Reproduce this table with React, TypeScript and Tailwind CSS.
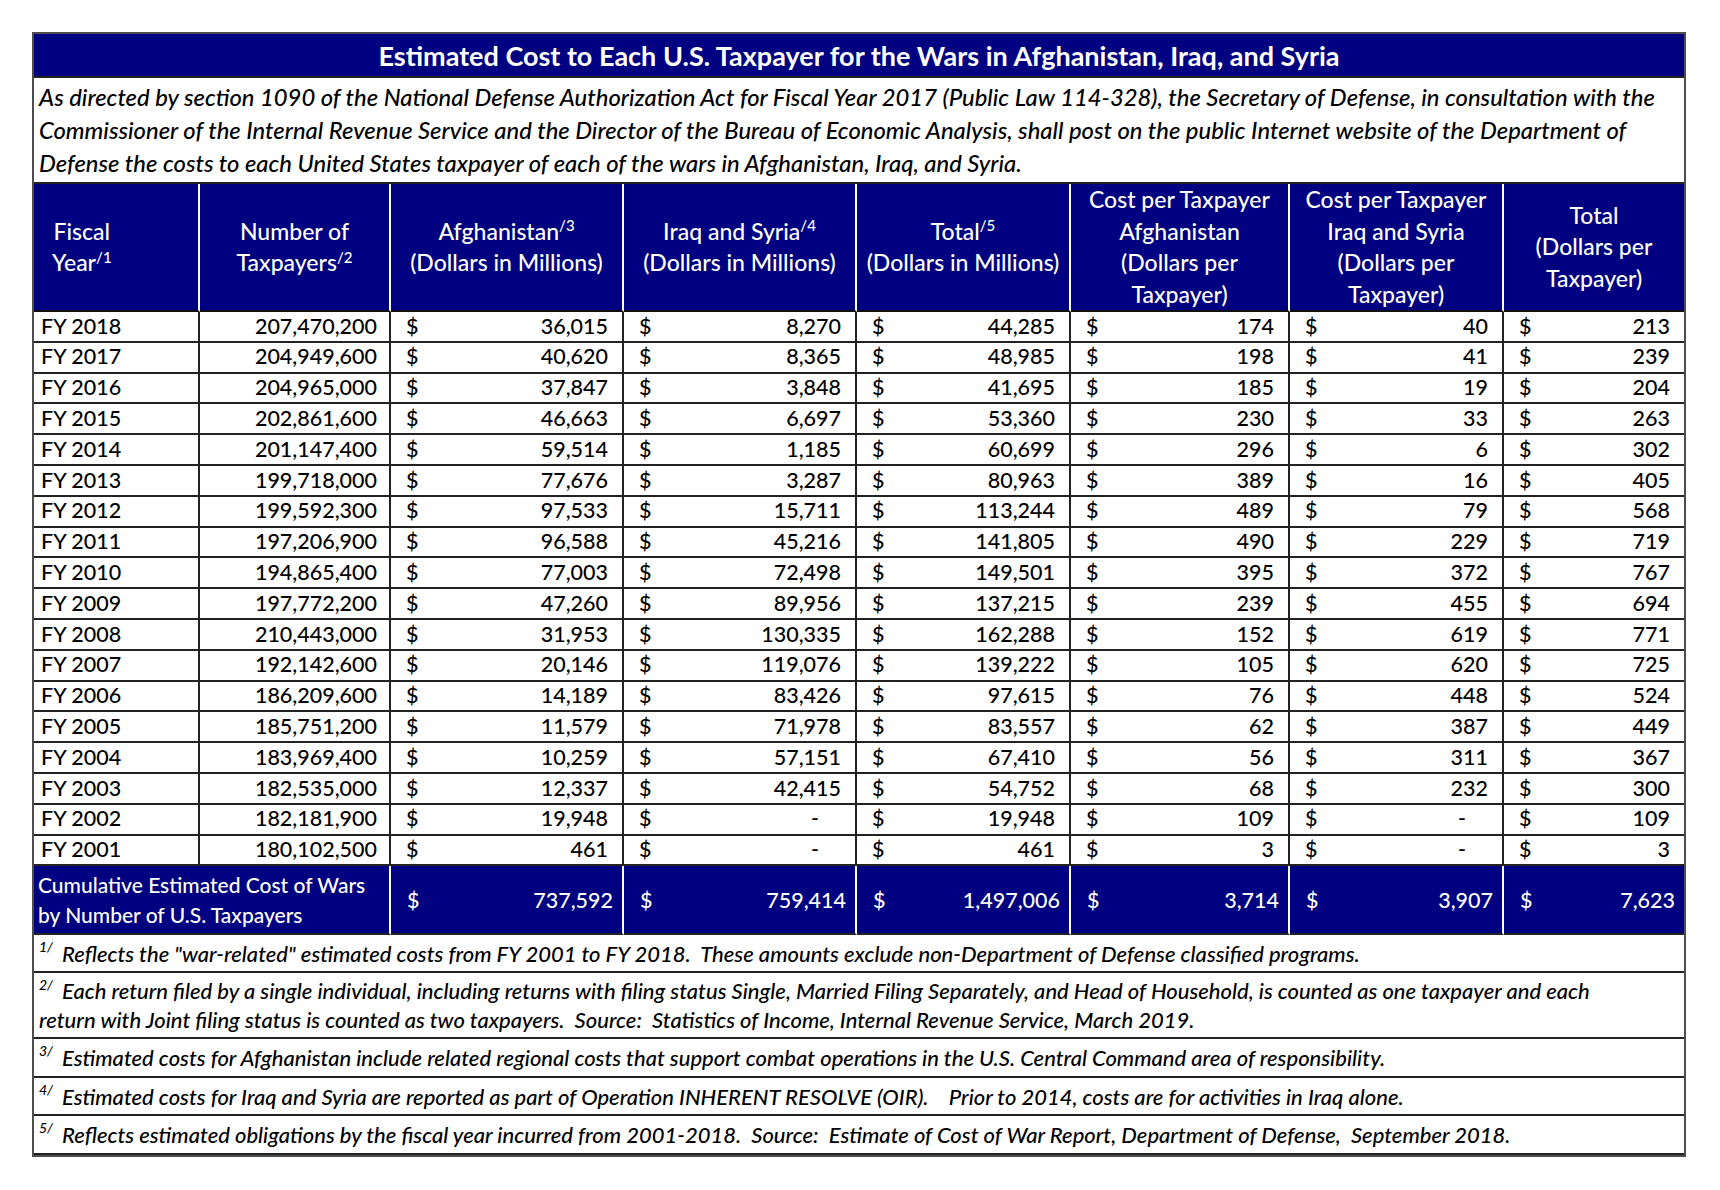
import React from 'react';

const rows: string[][] = [
  ['FY 2018', '207,470,200', '36,015', '8,270', '44,285', '174', '40', '213'],
  ['FY 2017', '204,949,600', '40,620', '8,365', '48,985', '198', '41', '239'],
  ['FY 2016', '204,965,000', '37,847', '3,848', '41,695', '185', '19', '204'],
  ['FY 2015', '202,861,600', '46,663', '6,697', '53,360', '230', '33', '263'],
  ['FY 2014', '201,147,400', '59,514', '1,185', '60,699', '296', '6', '302'],
  ['FY 2013', '199,718,000', '77,676', '3,287', '80,963', '389', '16', '405'],
  ['FY 2012', '199,592,300', '97,533', '15,711', '113,244', '489', '79', '568'],
  ['FY 2011', '197,206,900', '96,588', '45,216', '141,805', '490', '229', '719'],
  ['FY 2010', '194,865,400', '77,003', '72,498', '149,501', '395', '372', '767'],
  ['FY 2009', '197,772,200', '47,260', '89,956', '137,215', '239', '455', '694'],
  ['FY 2008', '210,443,000', '31,953', '130,335', '162,288', '152', '619', '771'],
  ['FY 2007', '192,142,600', '20,146', '119,076', '139,222', '105', '620', '725'],
  ['FY 2006', '186,209,600', '14,189', '83,426', '97,615', '76', '448', '524'],
  ['FY 2005', '185,751,200', '11,579', '71,978', '83,557', '62', '387', '449'],
  ['FY 2004', '183,969,400', '10,259', '57,151', '67,410', '56', '311', '367'],
  ['FY 2003', '182,535,000', '12,337', '42,415', '54,752', '68', '232', '300'],
  ['FY 2002', '182,181,900', '19,948', '-', '19,948', '109', '-', '109'],
  ['FY 2001', '180,102,500', '461', '-', '461', '3', '-', '3'],
];

const totals = ['737,592', '759,414', '1,497,006', '3,714', '3,907', '7,623'];

const footnotes = [
  ['3/', 'Estimated costs for Afghanistan include related regional costs that support combat operations in the U.S. Central Command area of responsibility.'],
  ['4/', 'Estimated costs for Iraq and Syria are reported as part of Operation INHERENT RESOLVE (OIR).    Prior to 2014, costs are for activities in Iraq alone.'],
  ['5/', 'Reflects estimated obligations by the fiscal year incurred from 2001-2018.  Source:  Estimate of Cost of War Report, Department of Defense,  September 2018.'],
];

const line = 'border-[#222]';
const foot = `border-b-2 ${line} px-[5px] italic text-[22px] leading-[29px] whitespace-pre-wrap`;

function Sup({ children }: { children: React.ReactNode }) {
  return <sup className="text-[15px] -top-[0.55em]">{children}</sup>;
}

function FootMark({ n }: { n: string }) {
  return <sup className="text-[14px] -top-[0.7em] mr-[9px]">{n}</sup>;
}

function Money({ v, last }: { v: string; last?: boolean }) {
  return (
    <td className={`border-b-2 ${last ? '' : 'border-r-2'} ${line} p-0`}>
      <div className="flex justify-between items-center pl-[15px] pr-[14px]">
        <span>$</span>
        {v === '-' ? <span className="mr-[22px]">-</span> : <span>{v}</span>}
      </div>
    </td>
  );
}

export default function App() {
  const head = 'border-r-2 border-white border-b-2 border-b-[#111] text-center leading-[31.5px] p-0';
  return (
    <div className="min-h-screen bg-white pt-[32px] pl-[32px] font-['Lato',sans-serif] font-medium text-black">
      <div className="w-[1654px] border-2 border-[#4d4d4d]">
        <table className="w-full table-fixed border-separate border-spacing-0 text-[21.5px]">
          <colgroup>
            <col className="w-[166px]" />
            <col className="w-[191px]" />
            <col className="w-[233px]" />
            <col className="w-[233px]" />
            <col className="w-[214px]" />
            <col className="w-[219px]" />
            <col className="w-[214px]" />
            <col className="w-[180px]" />
          </colgroup>
          <tbody>
            <tr className="h-[44px]">
              <td colSpan={8} className={`bg-[#000080] text-white text-center font-bold text-[27px] leading-none border-b-2 ${line}`}>
                Estimated Cost to Each U.S. Taxpayer for the Wars in Afghanistan, Iraq, and Syria
              </td>
            </tr>
            <tr className="h-[106px]">
              <td colSpan={8} className={`border-b-2 ${line} px-[5px] italic text-[23.8px] leading-[33px] align-middle`}>
                As directed by section 1090 of the National Defense Authorization Act for Fiscal Year 2017 (Public Law 114-328), the Secretary of Defense, in consultation with the
                <br />
                Commissioner of the Internal Revenue Service and the Director of the Bureau of Economic Analysis, shall post on the public Internet website of the Department of
                <br />
                Defense the costs to each United States taxpayer of each of the wars in Afghanistan, Iraq, and Syria.
              </td>
            </tr>
            <tr className="h-[125px] bg-[#000080] text-white text-[23px]">
              <td className={`${head} text-left`}>
                <div className="inline-block text-center pl-[18px]">
                  Fiscal
                  <br />
                  Year<Sup>/1</Sup>
                </div>
              </td>
              <td className={head}>
                Number of
                <br />
                Taxpayers<Sup>/2</Sup>
              </td>
              <td className={head}>
                Afghanistan<Sup>/3</Sup>
                <br />
                (Dollars in Millions)
              </td>
              <td className={head}>
                Iraq and Syria<Sup>/4</Sup>
                <br />
                (Dollars in Millions)
              </td>
              <td className={head}>
                Total<Sup>/5</Sup>
                <br />
                (Dollars in Millions)
              </td>
              <td className={head}>
                Cost per Taxpayer
                <br />
                Afghanistan
                <br />
                (Dollars per
                <br />
                Taxpayer)
              </td>
              <td className={head}>
                Cost per Taxpayer
                <br />
                Iraq and Syria
                <br />
                (Dollars per
                <br />
                Taxpayer)
              </td>
              <td className="text-center leading-[31.5px] p-0 border-b-2 border-b-[#111]">
                Total
                <br />
                (Dollars per
                <br />
                Taxpayer)
              </td>
            </tr>
            {rows.map((r) => (
              <tr key={r[0]} className="h-[30.8px] leading-none">
                <td className={`border-b-2 border-r-2 ${line} pl-[7px]`}>{r[0]}</td>
                <td className={`border-b-2 border-r-2 ${line} pr-[12px] text-right`}>{r[1]}</td>
                {r.slice(2).map((v, i) => (
                  <Money key={i} v={v} last={i === 5} />
                ))}
              </tr>
            ))}
            <tr className="h-[69px] bg-[#000080] text-white">
              <td colSpan={2} className="border-r-2 border-white border-b-2 border-b-[#222] px-[4px] text-[21px] leading-[30px]">
                Cumulative Estimated Cost of Wars
                <br />
                by Number of U.S. Taxpayers
              </td>
              {totals.map((v, i) => (
                <td key={i} className={`${i === 5 ? '' : 'border-r-2 border-white'} border-b-2 border-b-[#222] p-0`}>
                  <div className="flex justify-between items-center pl-[16px] pr-[9px]">
                    <span>$</span>
                    <span>{v}</span>
                  </div>
                </td>
              ))}
            </tr>
            <tr className="h-[38px]">
              <td colSpan={8} className={foot}>
                <FootMark n="1/" />
                Reflects the "war-related" estimated costs from FY 2001 to FY 2018.  These amounts exclude non-Department of Defense classified programs.
              </td>
            </tr>
            <tr className="h-[66px]">
              <td colSpan={8} className={foot}>
                <FootMark n="2/" />
                Each return filed by a single individual, including returns with filing status Single, Married Filing Separately, and Head of Household, is counted as one taxpayer and each
                <br />
                return with Joint filing status is counted as two taxpayers.  Source:  Statistics of Income, Internal Revenue Service, March 2019.
              </td>
            </tr>
            {footnotes.map((f) => (
              <tr key={f[0]} className="h-[38.5px]">
                <td colSpan={8} className={foot}>
                  <FootMark n={f[0]} />
                  {f[1]}
                </td>
              </tr>
            ))}
          </tbody>
        </table>
      </div>
    </div>
  );
}
